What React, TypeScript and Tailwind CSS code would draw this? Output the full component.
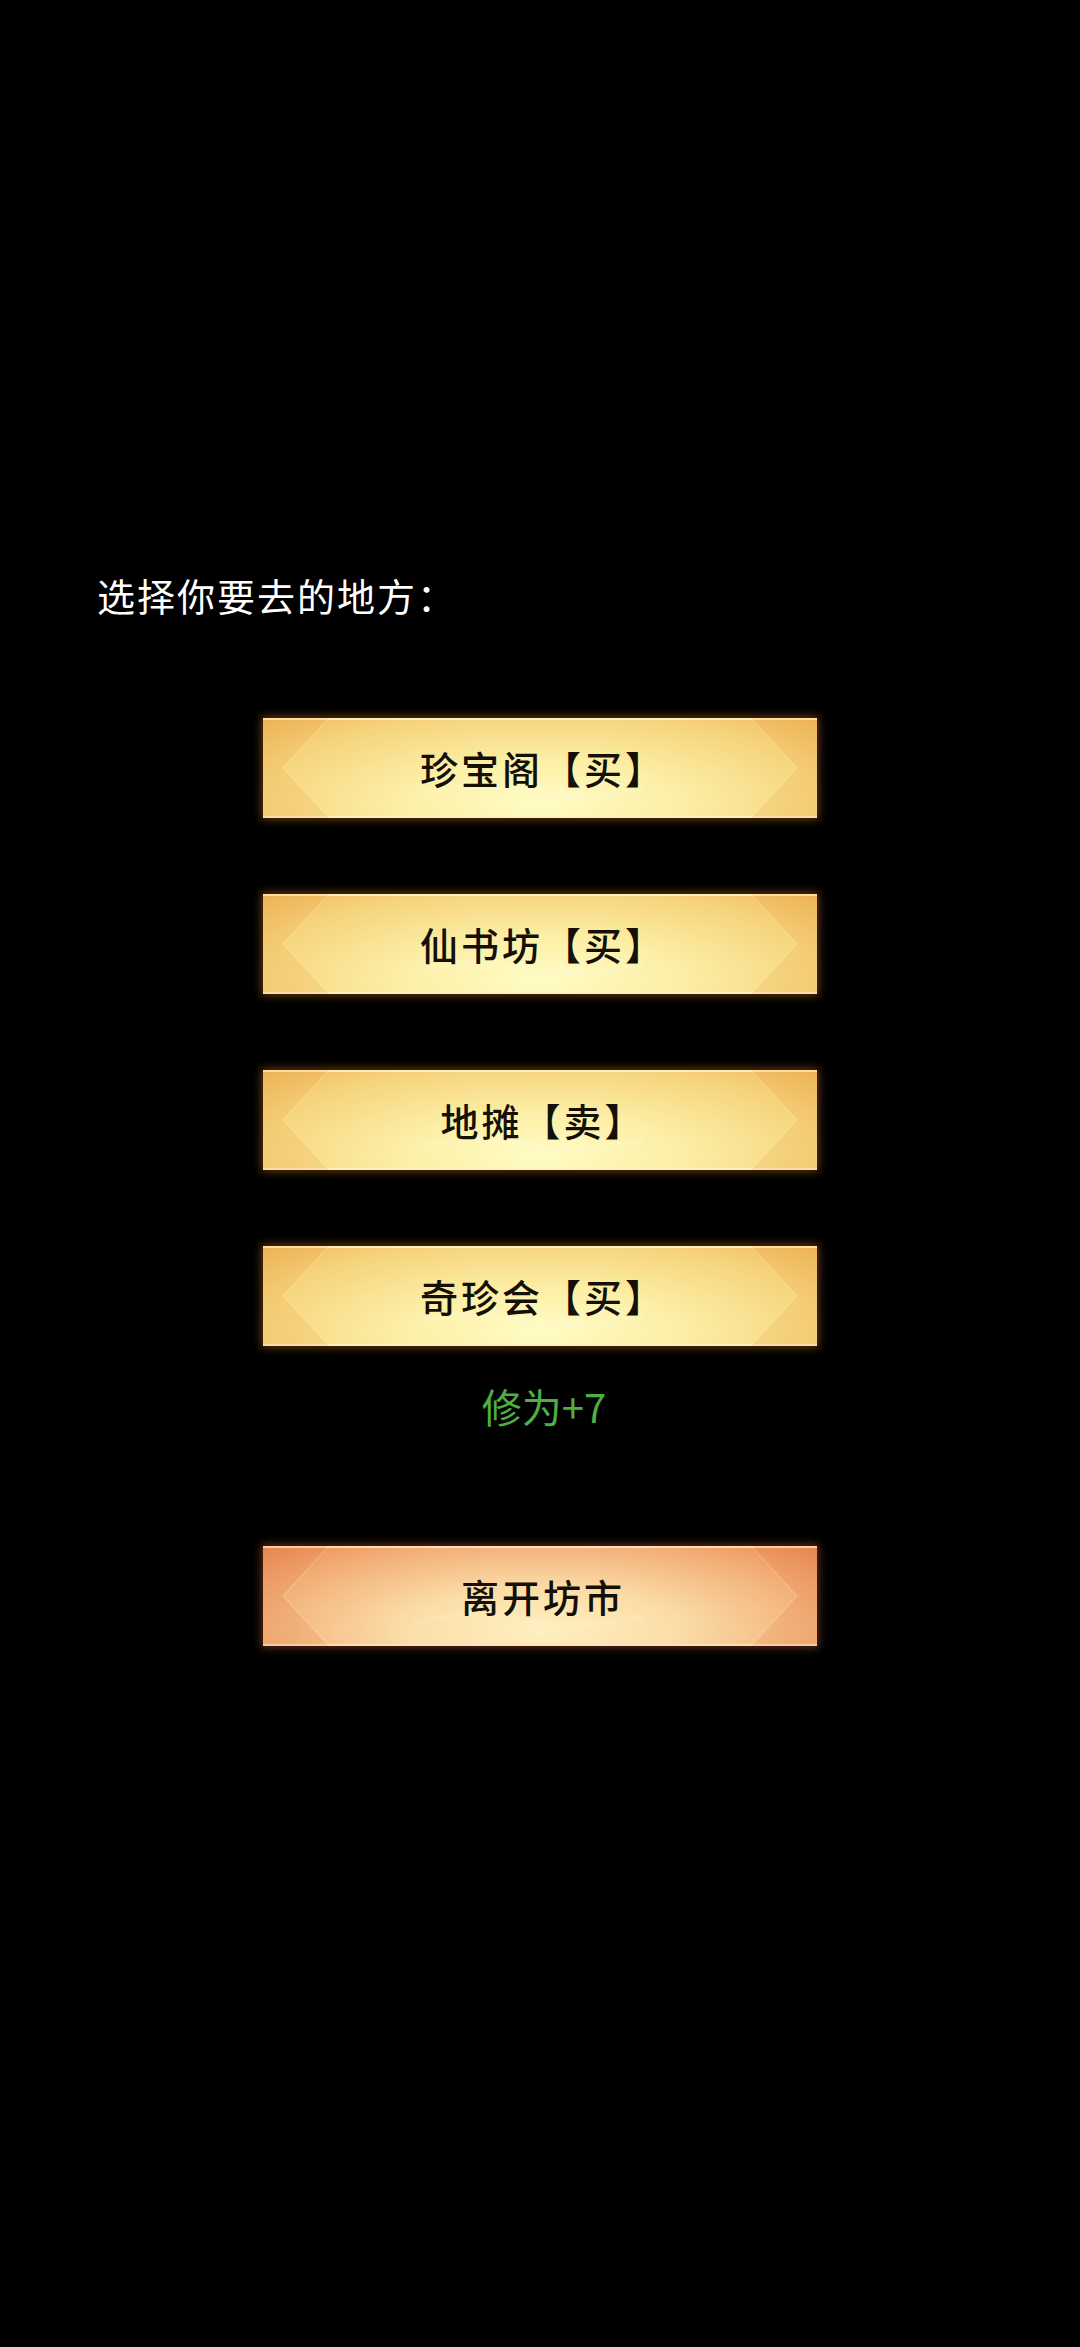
import React from 'react';

type Place = { label: string; tone: 'gold' | 'orange' };

const places: Place[] = [
  { label: '珍宝阁【买】', tone: 'gold' },
  { label: '仙书坊【买】', tone: 'gold' },
  { label: '地摊【卖】', tone: 'gold' },
  { label: '奇珍会【买】', tone: 'gold' },
];

const font = { fontFamily: '"Noto Sans CJK SC", "Noto Sans", sans-serif' };

// chevron ends drawn over the button face
function Chevrons({ shade }: { shade: string }) {
  return (
    <svg
      className="absolute inset-0 h-full w-full pointer-events-none"
      viewBox="0 0 554 100"
      preserveAspectRatio="none"
    >
      <polygon points="0,0 66,0 20,50 66,100 0,100" fill={shade} />
      <polygon points="554,0 488,0 534,50 488,100 554,100" fill={shade} />
      <polyline points="66,0 20,50 66,100" fill="none" stroke="rgba(255,250,210,0.2)" strokeWidth="1.5" />
      <polyline points="488,0 534,50 488,100" fill="none" stroke="rgba(255,250,210,0.2)" strokeWidth="1.5" />
      <path d="M150 78 Q 200 62 260 74 T 380 70" fill="none" stroke="rgba(255,255,255,0.1)" strokeWidth="6" />
    </svg>
  );
}

function PlaceButton({ label, tone }: Place) {
  const face =
    tone === 'gold'
      ? 'bg-[radial-gradient(ellipse_at_50%_85%,#fffcc4_0%,#fcefa6_35%,#f6d37c_75%,#efb85c_100%)] shadow-[0_0_8px_2px_rgba(200,120,30,0.45),inset_0_2px_0_rgba(255,240,190,0.9),inset_0_-2px_0_rgba(255,240,190,0.8)]'
      : 'bg-[radial-gradient(ellipse_at_50%_85%,#fff0c0_0%,#fbdda8_35%,#f2ad75_75%,#ea8a55_100%)] shadow-[0_0_8px_2px_rgba(200,100,50,0.45),inset_0_2px_0_rgba(255,225,190,0.9),inset_0_-2px_0_rgba(255,225,190,0.8)]';
  return (
    <button
      className={`relative flex h-[100px] w-[554px] items-center justify-center ${face}`}
    >
      <Chevrons shade={tone === 'gold' ? 'rgba(225,140,40,0.13)' : 'rgba(220,100,50,0.13)'} />
      <span
        className="relative pl-[6px] text-[38px] font-medium leading-none tracking-[3px] text-[#141008]"
        style={font}
      >
        {label}
      </span>
    </button>
  );
}

export default function App() {
  return (
    <div className="min-h-[2347px] w-full bg-black pt-[569px]" style={font}>
      <p className="pl-[97px] text-[38px] leading-[52px] tracking-[2px] text-white">选择你要去的地方：</p>

      <div className="mt-[97px] flex flex-col items-center">
        <div className="flex flex-col items-center gap-[76px]">
          {places.map((p) => (
            <PlaceButton key={p.label} {...p} />
          ))}
        </div>
        <p className="mt-[35px] pl-[8px] text-[40px] leading-[50px] text-[#4fb041]">修为+7</p>
        <div className="mt-[115px]">
          <PlaceButton label="离开坊市" tone="orange" />
        </div>
      </div>
    </div>
  );
}
